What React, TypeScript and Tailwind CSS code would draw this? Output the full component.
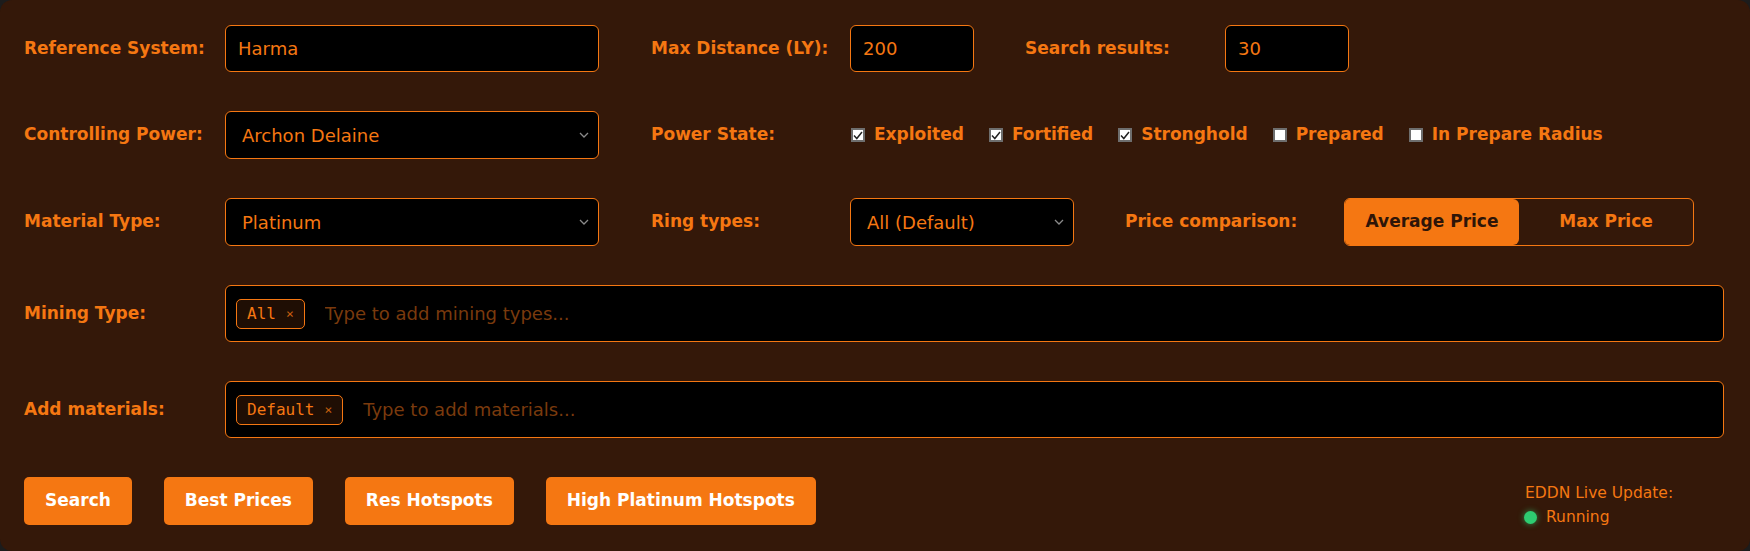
import { useState } from 'react'

const orange = 'text-[#f57712]'
const labelCls = 'font-bold text-[17px] text-[#f57712] shrink-0 whitespace-nowrap'
const fieldCls =
  'h-full bg-black border border-[#f57712] rounded-md text-[18px] text-[#f57712] outline-none'

function Chevron() {
  return (
    <svg
      className="absolute right-[10px] top-1/2 -translate-y-1/2 pointer-events-none"
      width="10"
      height="6"
      viewBox="0 0 10 6"
      fill="none"
    >
      <path d="M1 1l4 4 4-4" stroke="#8a8a8a" strokeWidth="1.3" />
    </svg>
  )
}

function Select({ value, width }: { value: string; width: string }) {
  return (
    <div className={`relative h-full ${width}`}>
      <select
        defaultValue={value}
        className={`${fieldCls} w-full appearance-none pl-[16px] pr-8`}
      >
        <option>{value}</option>
      </select>
      <Chevron />
    </div>
  )
}

function Check({ label, checked }: { label: string; checked: boolean }) {
  const [on, setOn] = useState(checked)
  return (
    <label className="flex items-center gap-[9px] cursor-pointer" onClick={() => setOn(!on)}>
      <span className="w-[14px] h-[14px] bg-white border-2 border-[#6e6e6e] flex items-center justify-center">
        {on && (
          <svg width="10" height="9" viewBox="0 0 10 9" fill="none">
            <path d="M1 4.5l2.8 3L9 1" stroke="#222" strokeWidth="1.5" />
          </svg>
        )}
      </span>
      <span className={labelCls}>{label}</span>
    </label>
  )
}

function TagInput({ tag, placeholder }: { tag: string; placeholder: string }) {
  return (
    <div className="flex-1 h-full bg-black border border-[#f57712] rounded-md flex items-center pl-[10px] gap-[20px]">
      <span className="flex items-center gap-[10px] h-[30px] px-[10px] border border-[#f57712] rounded-[5px] bg-[#1f0e04] text-[16px] text-[#f57712] font-['DejaVu_Sans_Mono',monospace]">
        {tag}
        <span className="text-[13px] text-[#c8600f]">×</span>
      </span>
      <input
        placeholder={placeholder}
        className="flex-1 bg-transparent outline-none text-[18px] text-[#f57712] placeholder:text-[#7a3a0d]"
      />
    </div>
  )
}

export default function App() {
  const [mode, setMode] = useState<'avg' | 'max'>('avg')

  return (
    <div className="w-full h-[551px] bg-[#1c1c1c]">
      <div className="h-full bg-[#341809] rounded-[12px] pl-[24px] pr-[26px] pt-[25px] flex flex-col gap-[39px] font-['DejaVu_Sans',sans-serif]">
        {/* row 1 */}
        <div className="flex items-center h-[47px]">
          <span className={`${labelCls} w-[201px]`}>Reference System:</span>
          <input defaultValue="Harma" className={`${fieldCls} w-[374px] px-[12px]`} />
          <span className={`${labelCls} w-[199px] ml-[52px]`}>Max Distance (LY):</span>
          <input defaultValue="200" className={`${fieldCls} w-[124px] px-[12px]`} />
          <span className={`${labelCls} w-[200px] ml-[51px]`}>Search results:</span>
          <input defaultValue="30" className={`${fieldCls} w-[124px] px-[12px]`} />
        </div>

        {/* row 2 */}
        <div className="flex items-center h-[48px]">
          <span className={`${labelCls} w-[201px]`}>Controlling Power:</span>
          <Select value="Archon Delaine" width="w-[374px]" />
          <span className={`${labelCls} w-[200px] ml-[52px]`}>Power State:</span>
          <div className="flex items-center gap-[25px]">
            <Check label="Exploited" checked />
            <Check label="Fortified" checked />
            <Check label="Stronghold" checked />
            <Check label="Prepared" checked={false} />
            <Check label="In Prepare Radius" checked={false} />
          </div>
        </div>

        {/* row 3 */}
        <div className="flex items-center h-[48px]">
          <span className={`${labelCls} w-[201px]`}>Material Type:</span>
          <Select value="Platinum" width="w-[374px]" />
          <span className={`${labelCls} w-[199px] ml-[52px]`}>Ring types:</span>
          <Select value="All (Default)" width="w-[224px]" />
          <span className={`${labelCls} w-[219px] ml-[51px]`}>Price comparison:</span>
          <div className="flex h-full w-[350px] border border-[#f57712] rounded-md overflow-hidden">
            <button
              onClick={() => setMode('avg')}
              className={`w-[174px] h-full font-bold text-[17px] ${
                mode === 'avg' ? 'bg-[#f57712] text-[#2e1508] rounded-r-md' : orange
              }`}
            >
              Average Price
            </button>
            <button
              onClick={() => setMode('max')}
              className={`flex-1 h-full font-bold text-[17px] ${
                mode === 'max' ? 'bg-[#f57712] text-[#2e1508] rounded-l-md' : orange
              }`}
            >
              Max Price
            </button>
          </div>
        </div>

        {/* row 4 */}
        <div className="flex items-center h-[57px]">
          <span className={`${labelCls} w-[201px]`}>Mining Type:</span>
          <TagInput tag="All" placeholder="Type to add mining types..." />
        </div>

        {/* row 5 */}
        <div className="flex items-center h-[57px]">
          <span className={`${labelCls} w-[201px]`}>Add materials:</span>
          <TagInput tag="Default" placeholder="Type to add materials..." />
        </div>

        {/* buttons */}
        <div className="flex items-center h-[48px]">
          <div className="flex items-center gap-[32px] h-full">
            {['Search', 'Best Prices', 'Res Hotspots', 'High Platinum Hotspots'].map(b => (
              <button
                key={b}
                className="h-full px-[21px] bg-[#f57712] rounded-[5px] text-white font-bold text-[17px]"
              >
                {b}
              </button>
            ))}
          </div>
          <div className="ml-auto w-[199px] text-[15.5px] text-[#f57712] mt-[8px] leading-[24px]">
            <div>EDDN Live Update:</div>
            <div className="flex items-center gap-[9px] -ml-[1px]">
              <span className="w-[13px] h-[13px] rounded-full bg-[#2ecc71] shadow-[0_0_6px_#2ecc71aa]" />
              <span>Running</span>
            </div>
          </div>
        </div>
      </div>
    </div>
  )
}
